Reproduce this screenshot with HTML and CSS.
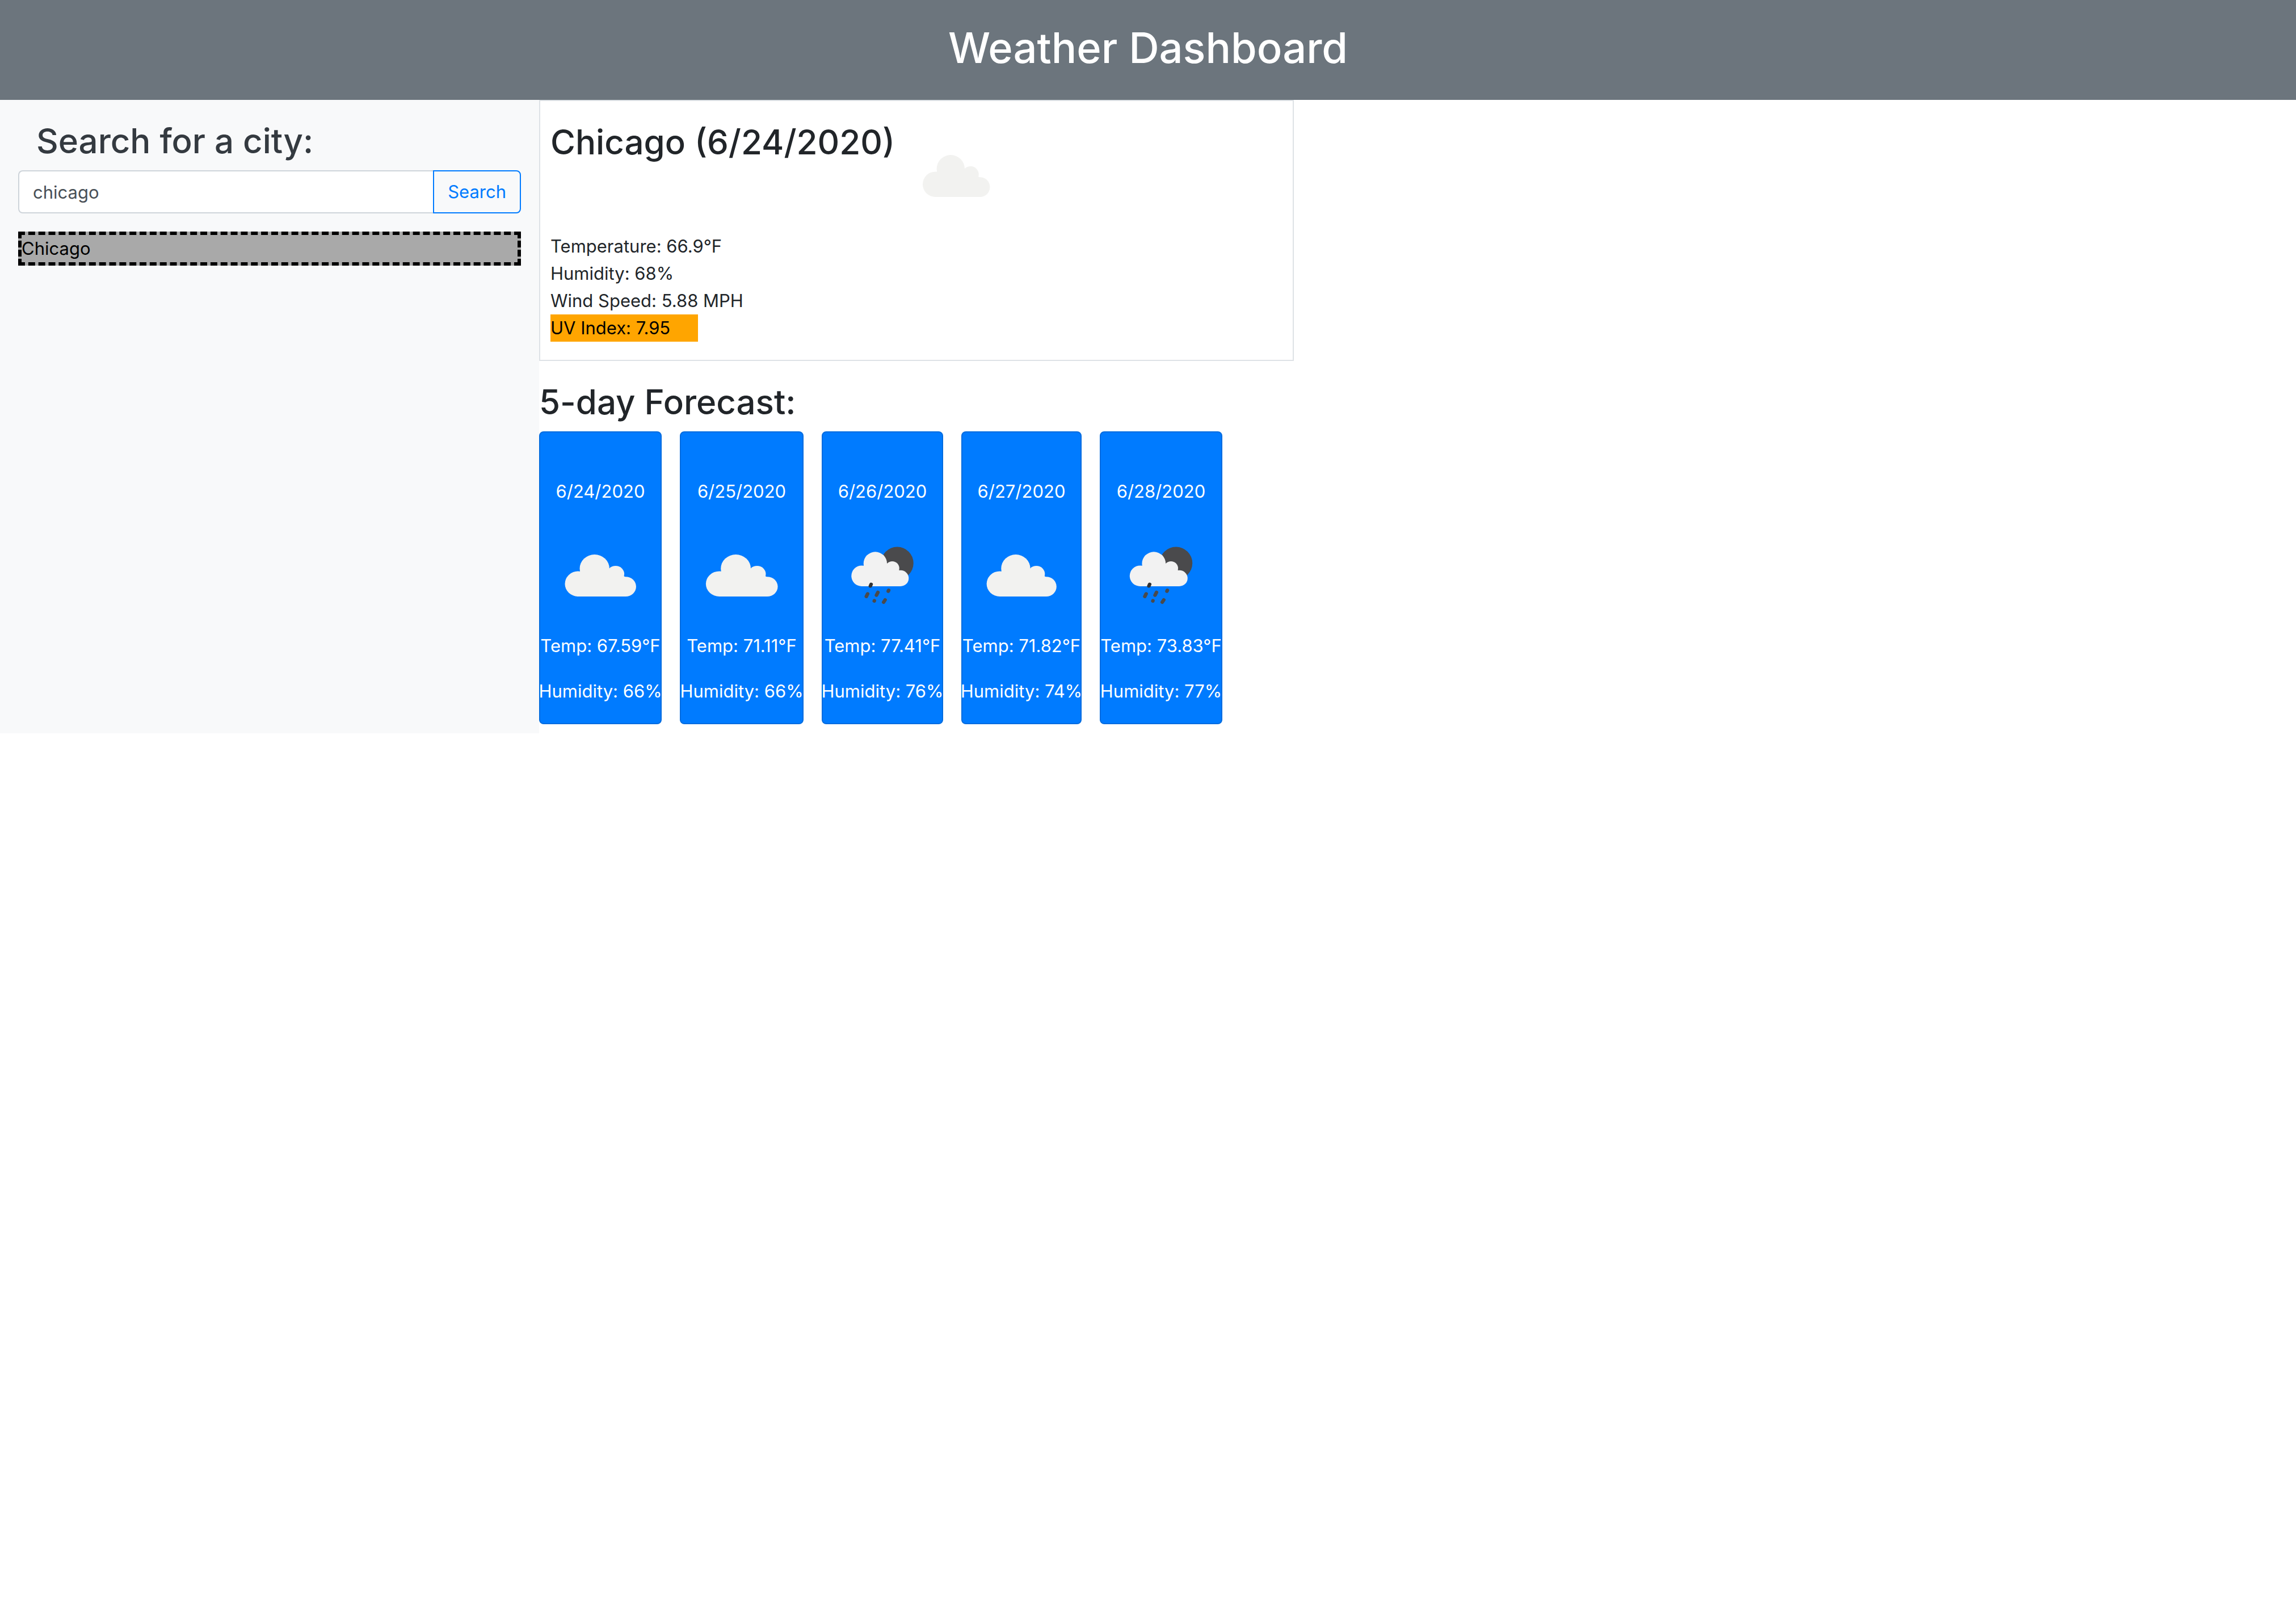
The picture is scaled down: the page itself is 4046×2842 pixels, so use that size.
FILE: index.html
```html
<!DOCTYPE html>
<html lang="en">
<head>
<meta charset="utf-8">
<meta name="viewport" content="width=device-width, initial-scale=1">
<title>Weather Dashboard</title>
<link rel="stylesheet" href="styles.css">
</head>
<body>
<svg class="sprite" aria-hidden="true">
  <symbol id="cloud" viewBox="0 0 200 200" preserveAspectRatio="none">
    <g fill="#f2f2f0">
      <circle cx="63.3" cy="114.7" r="22.3"/>
      <circle cx="90.3" cy="87.7" r="24.7"/>
      <circle cx="125.3" cy="97.4" r="14.4"/>
      <circle cx="142" cy="119.6" r="17.4"/>
      <path d="M63 93H84L112 94H128L142 103V137H63Z"/>
    </g>
  </symbol>
  <symbol id="night-rain" viewBox="0 0 200 200" preserveAspectRatio="none">
    <ellipse cx="124.8" cy="78.3" rx="27.3" ry="28.7" fill="#4a4a4c"/>
    <g fill="#f2f2f2">
      <ellipse cx="65.3" cy="100.7" rx="17.4" ry="18.3"/>
      <ellipse cx="88" cy="79" rx="19.7" ry="20.7"/>
      <ellipse cx="116.5" cy="87.3" rx="11.8" ry="12.3"/>
      <ellipse cx="130.5" cy="104.9" rx="13.6" ry="14.1"/>
      <path d="M65 83H80L106 84H118L130 92V119H65Z"/>
    </g>
    <g stroke="#4a4a4c" stroke-width="6" stroke-linecap="round" fill="none">
      <path d="M81 115.5L79.8 118.5" stroke="#333335"/>
      <path d="M75.2 132.3L73 137M92.4 129.7L90 134.7M110.5 126L109.8 127.7M86.5 144.4L86.3 145M104.5 143L102 147"/>
    </g>
  </symbol>
</svg>

<header class="banner">
  <h1 class="banner-title">Weather Dashboard</h1>
</header>

<div class="layout">
  <aside class="sidebar">
    <form class="search" onsubmit="return false">
      <h2 class="search-title"><label for="city">Search for a city:</label></h2>
      <div class="search-group">
        <input class="search-input" id="city" type="text" value="chicago">
        <button class="search-button" type="submit">Search</button>
      </div>
    </form>
    <ul class="history">
      <li class="history-item">Chicago</li>
    </ul>
  </aside>

  <main class="content">
    <section class="current">
      <div class="current-head">
        <h2>Chicago (6/24/2020)</h2>
        <svg class="current-icon" role="img" aria-label="Cloudy"><use href="#cloud"/></svg>
      </div>
      <p>Temperature: 66.9°F</p>
      <p>Humidity: 68%</p>
      <p>Wind Speed: 5.88 MPH</p>
      <p class="uv">UV Index: 7.95</p>
    </section>

    <section class="forecast">
      <h2>5-day Forecast:</h2>
      <div class="days">
        <article class="day">
          <p>6/24/2020</p>
          <svg class="day-icon" role="img" aria-label="Cloudy"><use href="#cloud"/></svg>
          <p>Temp: 67.59°F</p>
          <p>Humidity: 66%</p>
        </article>
        <article class="day">
          <p>6/25/2020</p>
          <svg class="day-icon" role="img" aria-label="Cloudy"><use href="#cloud"/></svg>
          <p>Temp: 71.11°F</p>
          <p>Humidity: 66%</p>
        </article>
        <article class="day">
          <p>6/26/2020</p>
          <svg class="day-icon" role="img" aria-label="Rain"><use href="#night-rain"/></svg>
          <p>Temp: 77.41°F</p>
          <p>Humidity: 76%</p>
        </article>
        <article class="day">
          <p>6/27/2020</p>
          <svg class="day-icon" role="img" aria-label="Cloudy"><use href="#cloud"/></svg>
          <p>Temp: 71.82°F</p>
          <p>Humidity: 74%</p>
        </article>
        <article class="day">
          <p>6/28/2020</p>
          <svg class="day-icon" role="img" aria-label="Rain"><use href="#night-rain"/></svg>
          <p>Temp: 73.83°F</p>
          <p>Humidity: 77%</p>
        </article>
      </div>
    </section>
  </main>
</div>
</body>
</html>
```

FILE: styles.css
```css
* {
  box-sizing: border-box;
}

body {
  margin: 0;
  background: #fff;
  color: #212529;
  font-family: Inter, "Liberation Sans", sans-serif;
  font-size: 31px;
  line-height: 48px;
}

h1,
h2,
p,
ul {
  margin: 0;
  padding: 0;
}

h2 {
  font-size: 60px;
  font-weight: 500;
  line-height: 80px;
}

.sprite {
  display: block;
  width: 0;
  height: 0;
}

.banner {
  padding: 32px 32px 40px;
  background: #6c757d;
  color: #fff;
  text-align: center;
}

.banner-title {
  font-size: 74px;
  font-weight: 500;
  line-height: 104px;
}

.layout {
  display: grid;
  grid-template-columns: 950fr 1330fr 1766fr;
}

.sidebar {
  padding: 32px;
  background: #f8f9fa;
}

.search-title {
  margin-bottom: 12px;
  padding-left: 32px;
  color: #343a40;
}

.search-group {
  display: flex;
}

.search-input,
.search-button {
  height: 76px;
  padding: 0 24px;
  font: inherit;
}

.search-input {
  flex: 1;
  min-width: 0;
  border: 2px solid #ced4da;
  border-right: 0;
  border-radius: 8px 0 0 8px;
  background: #fff;
  color: #495057;
}

.search-button {
  border: 2px solid #007bff;
  border-radius: 0 8px 8px 0;
  background: transparent;
  color: #007bff;
}

.history {
  margin-top: 32px;
  list-style: none;
}

.history-item {
  border: 6px dashed #000;
  background: #a9a9a9;
  color: #000;
}

.current {
  padding: 32px 18px;
  border: 2px solid #dee2e6;
}

.current-head {
  display: flex;
  align-items: flex-start;
  gap: 8px;
}

.current-icon {
  width: 200px;
  height: 200px;
}

.uv {
  width: 260px;
  background: #ffa500;
  color: #000;
}

.forecast {
  padding: 32px 0 16px;
}

.days {
  display: grid;
  grid-template-columns: 216px 218px 214px 212px 216px;
  gap: 32px;
  margin-top: 12px;
}

.day {
  display: flex;
  flex-direction: column;
  align-items: center;
  gap: 32px;
  padding: 80px 0 32px;
  border: 2px solid rgba(0, 0, 0, 0.125);
  border-radius: 8px;
  background: #007bff;
  color: #fff;
  white-space: nowrap;
}

.day-icon {
  width: 100%;
  height: 200px;
  margin: -8px 0 -32px;
}
```
